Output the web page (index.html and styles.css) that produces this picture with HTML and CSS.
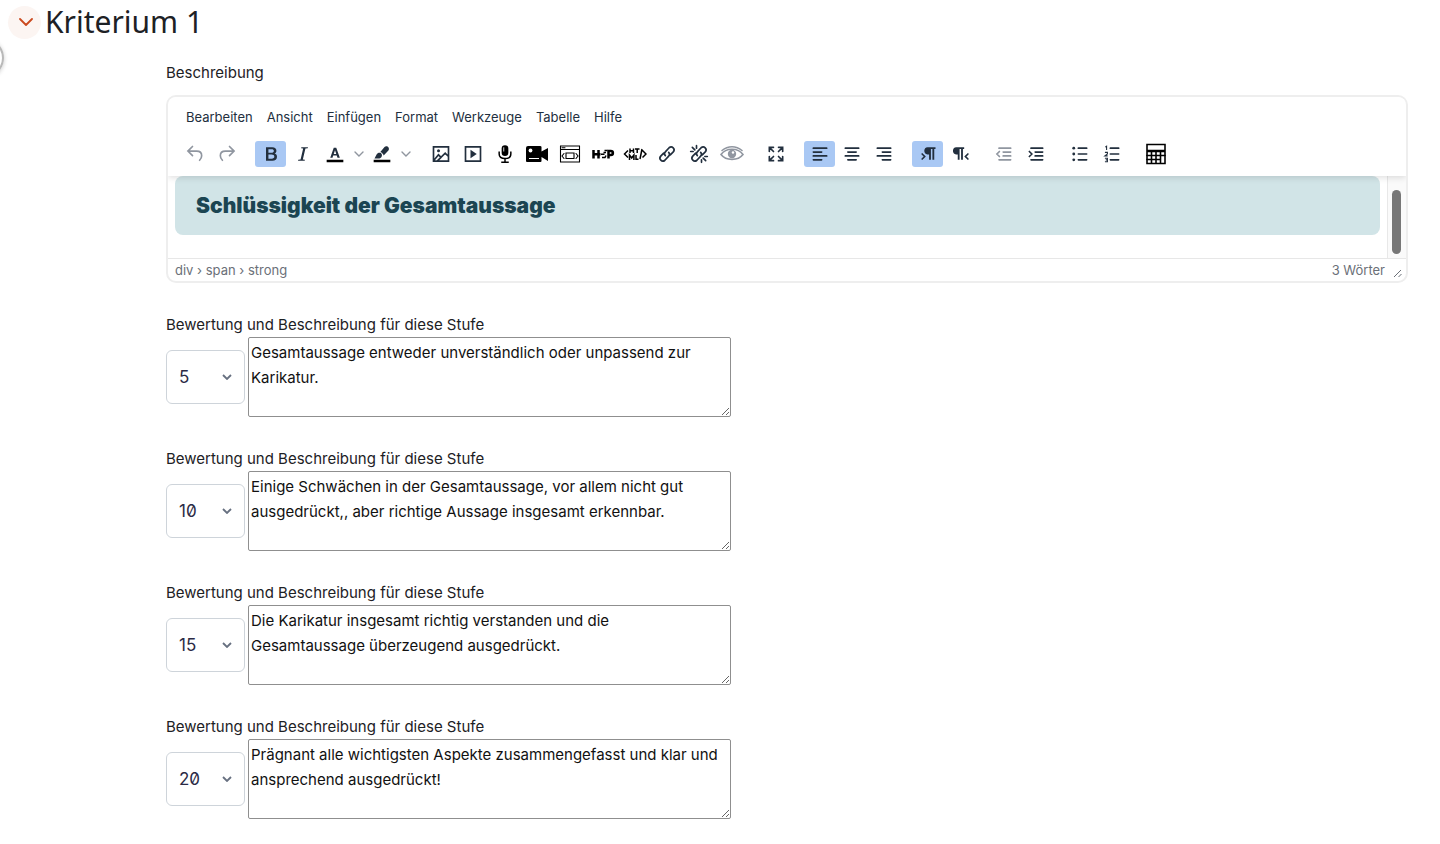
FILE: index.html
```
<!DOCTYPE html>
<html lang="de">
<head>
<meta charset="utf-8">
<title>Kriterium 1</title>
<link rel="stylesheet" href="styles.css">
</head>
<body>
<main class="page">
<span class="drawer-toggle"></span>
<header class="section-head">
<button class="collapse" aria-label="Einklappen"><svg width="14" height="8" viewBox="0 0 14 8" fill="none" stroke="#cb4a1f" stroke-width="1.8" stroke-linecap="round" stroke-linejoin="round"><path d="M1 1l6 6 6-6"/></svg></button>
<h1>Kriterium 1</h1>
</header>
<div class="form">
<p class="label">Beschreibung</p>
<section class="editor">
<div class="editor-head">
<nav class="menubar"><button>Bearbeiten</button><button>Ansicht</button><button>Einfügen</button><button>Format</button><button>Werkzeuge</button><button>Tabelle</button><button>Hilfe</button></nav>
<div class="toolbar">
<div class="group">
<button class="tool off" aria-label="Rückgängig"><svg viewBox="0 0 24 24"><path class="l" d="M9 3L3.500 8.500 9 14M4 8.500h10c4 0 6 2.500 6 5.500 0 2-.8 3.700-2.500 5.500"/></svg></button>
<button class="tool off" aria-label="Wiederholen"><svg viewBox="0 0 24 24"><path class="l" d="M15 3l5.500 5.500L15 14M20 8.500H10C6 8.500 4 11 4 14c0 2 .8 3.700 2.500 5.500"/></svg></button>
</div>
<div class="group">
<button class="tool on" aria-label="Fett"><svg viewBox="0 0 24 24"><path fill-rule="evenodd" d="M6 4h7.500c3.200 0 5 1.500 5 4 0 1.700-.9 2.900-2.200 3.400 1.800.4 2.900 1.800 2.900 3.800 0 3-2.100 4.800-5.600 4.800H6zm2.900 2.300v4.100h3.400c2 0 3.100-.7 3.100-2.100 0-1.300-.9-2-2.700-2zm0 6.300v5h3.900c2.100 0 3.200-.8 3.200-2.500s-1.100-2.500-3.400-2.500z"/></svg></button>
<button class="tool" aria-label="Kursiv"><svg viewBox="0 0 24 24"><path d="M10 4h8l-.3 1-2.800.4L11.800 18.600l2.500.4L14 20H6l.3-1 2.800-.4L12.200 5.400 9.700 5z"/></svg></button>
<button class="tool" aria-label="Textfarbe"><svg viewBox="0 0 24 24"><path fill="#000" d="M2 19h20v2.800H2z"/><path fill-rule="evenodd" d="M10.500 4.500h3l4.300 12H15l-.9-2.600H9.800L9 16.500H6.300zm1.500 3L10.500 12h3z"/></svg></button>
<button class="chevron" aria-label="Textfarben"><svg viewBox="0 0 10 6"><path class="l" d="M1 1l4 4 4-4"/></svg></button>
<button class="tool" aria-label="Hintergrundfarbe"><svg viewBox="0 0 24 24"><path fill="#000" d="M2 19h20v2.800H2z"/><path d="M3 17.500l2.500-5c1.500-2.500 5-2.500 6.200-.3 1 2.600-1 5.300-4 5.300zM10 9.500l5-6c2.600-2.500 7 1 4.700 4.200l-5.700 6c-.5-2-1.900-3.400-4-4.200z"/></svg></button>
<button class="chevron" aria-label="Hintergrundfarben"><svg viewBox="0 0 10 6"><path class="l" d="M1 1l4 4 4-4"/></svg></button>
</div>
<div class="group media">
<button class="tool" aria-label="Bild"><svg viewBox="0 0 24 24"><path class="l" d="M3 3.500h18v17H3zM4 19l5-6 3 3 5-5 4 4M8 20l4-4"/><circle cx="9" cy="8" r="1.800"/></svg></button>
<button class="tool" aria-label="Medien"><svg viewBox="0 0 24 24"><path class="l" d="M3 3.500h18v17H3z"/><path d="M9 7l7.500 5L9 17z"/></svg></button>
<button class="tool black" aria-label="Audio aufnehmen"><svg viewBox="0 0 24 24"><rect x="8" y="1.500" width="8" height="13" rx="4"/><path class="stem" d="M5 9v3c0 3.500 3 5.500 7 5.500s7-2 7-5.500V9M12 17v5M7.500 22h9"/><path d="M10.500 4v5" stroke="#fff"/></svg></button>
<button class="tool black wide" aria-label="Video aufnehmen"><svg class="big" viewBox="0 0 24 24"><path d="M3 4h12q1.500 0 1.500 1v4.500L23 6v13l-6.500-4v4q0 1-1 1H2q-1 0-1-1V6q0-2 2-2z"/><circle cx="5.500" cy="8.500" r="1.900" fill="#fff"/><path stroke="#fff" d="M4 16.500h10"/></svg></button>
<button class="tool black wide" aria-label="Bildschirm aufnehmen"><svg class="big thin" viewBox="0 0 24 24"><path class="l" d="M2.500 4h19v16h-19zM2.500 7.500h19M8 11h8v5.500H8zM6 11.500L4 14l2 2.500M18 11.500l2 2.500-2 2.500M4 5.800h3"/></svg></button>
<button class="tool black" aria-label="H5P"><svg class="big" viewBox="0 0 24 24"><path class="bold" d="M2.500 8v8.500M7.500 8v8.500M2.500 12.200h7M17.500 16.500V9h2.300c2.800 0 2.800 4 0 4h-2.300"/><path class="slim" d="M13.500 8.500h3M10 12.300h3.500M12.500 10.500h2.500M11 15.500h3l1-2"/></svg></button>
<button class="tool black" aria-label="HTML"><svg class="big" viewBox="0 0 24 24"><path class="slim" d="M5 8.500L1.500 12 5 15.500M19.500 8.500L23 12l-3.500 3.500M7 6.500V11M10.500 6.500V11M7 8.800h3.500M12 7h4.500M14.200 7v4M6.500 18v-5l2.200 3 2.200-3v5M13 13v4.300h2.500M19 7l-2 10"/></svg></button>
<button class="tool" aria-label="Link"><svg viewBox="0 0 24 24"><path class="l" d="M10 14c-2-2-1-3.500 0-4.500l4.500-5C18 1.500 22.500 6 19.500 9.500L16 13M14 10c2 2 1 3.500 0 4.500l-4.500 5C6 22.500 1.500 18 4.500 14.500L8 11"/></svg></button>
<button class="tool" aria-label="Link entfernen"><svg viewBox="0 0 24 24"><path class="l" d="M10 14c-2-2-1-3.500 0-4.500l4.500-5C18 1.500 22.500 6 19.500 9.500L16 13M14 10c2 2 1 3.500 0 4.500l-4.500 5C6 22.500 1.500 18 4.500 14.500L8 11M9 2v3M4 4l3 3M2 9h3M15 22v-3M20 20l-3-3M22 15h-3"/></svg></button>
<button class="tool off eye" aria-label="Barrierefreiheit"><svg class="big" viewBox="0 0 24 24"><path class="l" d="M1 12.500c5-7 17-7 22 0-5 6.500-17 6.500-22 0zM2 8.500c6-5 14-5 20 0"/><circle cx="12" cy="12" r="4.200"/><circle cx="13" cy="10.500" r="1.200" fill="#fff"/></svg></button>
</div>
<div class="group">
<button class="tool" aria-label="Vollbild"><svg viewBox="0 0 24 24"><path class="l" d="M4 9V4h5M15 4h5v5M20 15v5h-5M9 20H4v-5M4 4l5 5M20 4l-5 5M20 20l-5-5M4 20l5-5"/></svg></button>
</div>
<div class="group">
<button class="tool on" aria-label="Linksbündig"><svg viewBox="0 0 24 24"><path class="l" d="M4 5h16M4 9.700h10M4 14.300h16M4 19h10"/></svg></button>
<button class="tool" aria-label="Zentriert"><svg viewBox="0 0 24 24"><path class="l" d="M4 5h16M7 9.700h10M4 14.300h16M7 19h10"/></svg></button>
<button class="tool" aria-label="Rechtsbündig"><svg viewBox="0 0 24 24"><path class="l" d="M4 5h16M10 9.700h10M4 14.300h16M10 19h10"/></svg></button>
</div>
<div class="group">
<button class="tool on" aria-label="Von links nach rechts"><svg viewBox="0 0 24 24"><path d="M11.500 4H21v2h-1.500v13h-2.200V6h-1.800v13h-2.200v-6.500h-2c-5 0-5-8.500.2-8.500z"/><path class="l" d="M5 12l3 3-3 3"/></svg></button>
<button class="tool" aria-label="Von rechts nach links"><svg viewBox="0 0 24 24"><path d="M7.500 4H17v2h-1.500v13h-2.200V6h-1.800v13H9.300v-6.500h-2c-5 0-5-8.500.2-8.500z"/><path class="l" d="M21.500 12l-3 3 3 3"/></svg></button>
</div>
<div class="group">
<button class="tool off" aria-label="Einzug verkleinern"><svg viewBox="0 0 24 24"><path class="l" d="M6 5h14M11 9.700h9M11 14.300h9M6 19h14M6.500 9l-3 3 3 3"/></svg></button>
<button class="tool" aria-label="Einzug vergrößern"><svg viewBox="0 0 24 24"><path class="l" d="M6 5h14M11 9.700h9M11 14.300h9M6 19h14M4 9l3 3-3 3"/></svg></button>
</div>
<div class="group">
<button class="tool" aria-label="Aufzählung"><svg viewBox="0 0 24 24"><path class="l" d="M10 5h10M10 12h10M10 19h10"/><circle cx="4.500" cy="5" r="1.700"/><circle cx="4.500" cy="12" r="1.700"/><circle cx="4.500" cy="19" r="1.700"/></svg></button>
<button class="tool" aria-label="Nummerierte Liste"><svg viewBox="0 0 24 24"><path class="l" d="M10 5h10M10 12h10M10 19h10"/><path class="fine" d="M4 3.500l1.500-.8v4.500M3.500 10h3v2l-3 2.200h3.300M3.500 17h3v2h-2 2v2.300h-3"/></svg></button>
</div>
<div class="group">
<button class="tool black" aria-label="Formel"><svg class="big" viewBox="0 0 24 24"><path class="l" d="M3 2.500h18v19H3z"/><path class="bold" d="M3 9h18"/><path class="l" d="M7.500 9v12M12 9v12M16.500 9v12M3 13.500h18M3 17.500h13.500"/></svg></button>
</div>
</div>
</div>
<div class="canvas">
<div class="document"><div class="banner"><strong>Schlüssigkeit der Gesamtaussage</strong></div></div>
<div class="scrollbar"><div class="thumb"></div></div>
</div>
<footer class="status"><span>div › span › strong</span><span class="words">3 Wörter<svg width="10" height="10" viewBox="0 0 10 10" fill="none" stroke="#6b7078" stroke-width="1"><path d="M1 9l7-7M5.500 9l3-3"/></svg></span></footer>
</section>
<div class="level">
<label for="t1">Bewertung und Beschreibung für diese Stufe</label>
<div class="row"><select aria-label="Punkte"><option>5</option></select><textarea id="t1">Gesamtaussage entweder unverständlich oder unpassend zur
Karikatur.</textarea></div>
</div>
<div class="level">
<label for="t2">Bewertung und Beschreibung für diese Stufe</label>
<div class="row"><select aria-label="Punkte"><option>10</option></select><textarea id="t2">Einige Schwächen in der Gesamtaussage, vor allem nicht gut
ausgedrückt,, aber richtige Aussage insgesamt erkennbar.</textarea></div>
</div>
<div class="level">
<label for="t3">Bewertung und Beschreibung für diese Stufe</label>
<div class="row"><select aria-label="Punkte"><option>15</option></select><textarea id="t3">Die Karikatur insgesamt richtig verstanden und die
Gesamtaussage überzeugend ausgedrückt.</textarea></div>
</div>
<div class="level">
<label for="t4">Bewertung und Beschreibung für diese Stufe</label>
<div class="row"><select aria-label="Punkte"><option>20</option></select><textarea id="t4">Prägnant alle wichtigsten Aspekte zusammengefasst und klar und
ansprechend ausgedrückt!</textarea></div>
</div>
</div>
</main>
</body>
</html>
```
FILE: styles.css
```
* { box-sizing: border-box; }
body { margin: 0; background: #fff; color: #1d2125; font: 15px/24px Inter, sans-serif; overflow-x: hidden; }
button { border: 0; padding: 0; margin: 0; background: none; font: inherit; color: inherit; }
.page { position: relative; padding: 0 32px 0 8px; }
.drawer-toggle { position: absolute; left: -36px; top: 38px; width: 40px; height: 40px; border: 2px solid #b9b9b9; border-radius: 50%; box-shadow: 0 1px 4px #0003; }
.section-head { display: flex; align-items: center; gap: 4px; height: 44px; }
.collapse { display: flex; align-items: center; justify-content: center; width: 33px; height: 33px; padding-left: 2px; border-radius: 50%; background: #fcf5f2; }
h1 { margin: 0; font: 400 30px/40px "Noto Sans", sans-serif; }
.form { margin-left: 158px; padding-top: 17px; }
.label { margin: 0 0 10px; }
.editor { border: 2px solid #eee; border-radius: 10px; overflow: hidden; color: #222f3e; }
.editor-head { position: relative; height: 79px; background: #fff; box-shadow: 0 2px 6px #0000001f; }
.menubar { display: flex; gap: 14px; padding: 8px 18px 0; font-size: 13px; }
.toolbar { display: flex; gap: 12px; padding: 12px 11px 0; }
.group { display: flex; }
.tool { display: flex; align-items: center; justify-content: center; width: 31px; height: 26px; margin-right: 1px; border-radius: 3px; }
.wide { width: 32px; }
.eye { width: 33px; }
.media { margin-right: -1px; }
.on { background: #a9c8f4; }
.off { color: #9096a0; }
.black { color: #000; }
.chevron { width: 15px; display: flex; align-items: center; justify-content: center; color: #90969f; }
.tool svg { width: 20px; height: 20px; fill: currentColor; }
.tool svg.big { width: 24px; height: 24px; }
.chevron svg { width: 10px; height: 6px; }
.l { fill: none; stroke: currentColor; stroke-width: 2; stroke-linecap: round; }
.stem { fill: none; stroke: currentColor; stroke-width: 1.8; }
.chevron .l { stroke-width: 1.4; }
.big .l { stroke-width: 1.6; }
.thin.big .l { stroke-width: 1.1; }
.bold { fill: none; stroke: currentColor; stroke-width: 2.5; }
.slim { fill: none; stroke: currentColor; stroke-width: 1.5; }
.fine { fill: none; stroke: currentColor; stroke-width: 1.3; }
.canvas { display: flex; height: 82px; }
.document { flex: 1; padding: 0 7px; }
.banner { height: 59px; padding: 18px 21px; border-radius: 8px; background: #d1e4e7; color: #1b4552; font: 700 21px/24px Inter, sans-serif; }
.scrollbar { width: 19px; padding: 14px 0 0 4px; border-left: 1px solid #e8e8e8; background: #fafafa; }
.thumb { width: 9px; height: 64px; border-radius: 5px; background: #777; }
.status { display: flex; justify-content: space-between; border-top: 1px solid #e7e7e7; padding: 0 3px 0 7px; color: #6b7078; font-size: 13px; line-height: 22px; }
.words { display: flex; align-items: center; gap: 8px; }
.words svg { margin-top: 6px; }
.level { margin-top: 30px; }
.level label { display: block; }
.row { display: flex; align-items: center; gap: 3px; }
select { appearance: none; width: 79px; height: 54px; padding: 0 12px; border: 1px solid #ced4da; border-radius: 6px; color: #2b2a45; font: 17px/24px Inter, sans-serif; font-feature-settings: "zero"; background: #fff url("data:image/svg+xml,%3Csvg xmlns='http://www.w3.org/2000/svg' viewBox='0 0 10 6'%3E%3Cpath d='M1 1l4 4 4-4' fill='none' stroke='%23677080' stroke-width='1.800'/%3E%3C/svg%3E") no-repeat right 12px center / 10px 6px; }
textarea { width: 483px; height: 80px; padding: 2px 0 2px 2px; border: 1px solid #8f8f8f; border-radius: 2px; color: #111; font: 15px/25px Inter, sans-serif; overflow: hidden; }
```
